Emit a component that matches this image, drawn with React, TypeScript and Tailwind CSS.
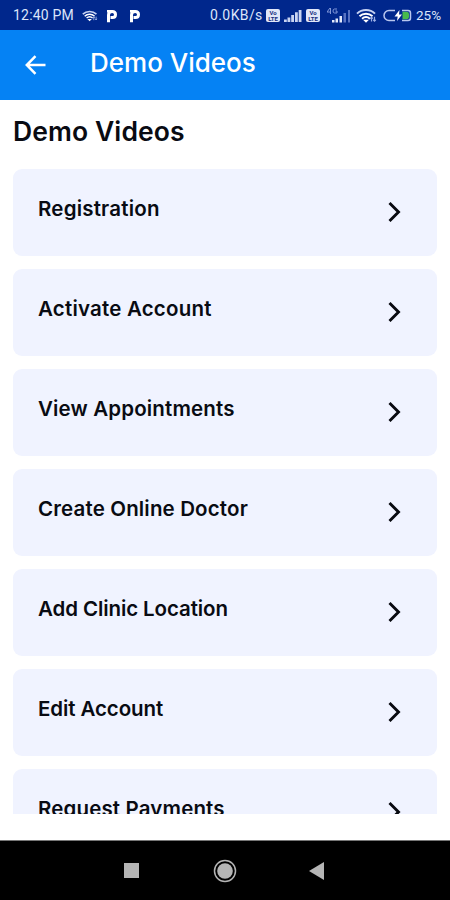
const VIDEOS = [
  { title: "Registration", spacing: "tracking-[0.2px]" },
  { title: "Activate Account", spacing: "tracking-[0.2px]" },
  { title: "View Appointments", spacing: "tracking-[0.15px]" },
  { title: "Create Online Doctor", spacing: "tracking-[0.15px]" },
  { title: "Add Clinic Location", spacing: "tracking-[-0.1px]" },
  { title: "Edit Account", spacing: "tracking-[-0.1px]" },
  { title: "Request Payments", spacing: "tracking-[0.15px]" },
]

function WifiIcon({ className }: { className: string }) {
  return (
    <svg viewBox="0 0 21 14" className={className} fill="none">
      <path d="M1 4.600C6-.2 14-.2 19 4.600" stroke="#c6d3f3" strokeWidth="2" />
      <path d="M3.500 7.300c3.700-3.500 9.300-3.500 13 0" stroke="#fff" strokeWidth="2" />
      <path d="M6 9.700c2.400-2.100 5.600-2.100 8 0" stroke="#fff" strokeWidth="1.800" />
      <path d="M7 10.800h6L10 13.800z" fill="#fff" />
      <path d="M15.500 12.500V8.300m-1.300 1.300 1.300-1.400 1.300 1.400M18.500 7.800V12m-1.300-1.200 1.300 1.400 1.300-1.400" stroke="#9db0e5" strokeWidth="1.200" />
    </svg>
  )
}

function ParkingIcon() {
  return (
    <svg viewBox="0 0 12 14" className="h-[14px] w-3" fill="none">
      <path d="M2.500 13.300V6C2.500 3.500 4.200 2.500 6.200 2.500S9.500 3.700 9.500 5.500 8.200 8.500 6.500 8.500H4.500" stroke="#fff" strokeWidth="3" />
      <path d="M1 1h5.500v2.500H1z" fill="#fff" />
    </svg>
  )
}

function VolteIcon() {
  return (
    <div className="flex h-[13px] w-[14px] shrink-0 flex-col items-center justify-center rounded-[2px] bg-[#e1e7f8] text-[6px] leading-[5.5px] font-bold text-[#152d82]">
      <span>Vo</span>
      <span>LTE</span>
    </div>
  )
}

function SignalIcon() {
  return (
    <svg viewBox="0 0 19 13" className="h-[13px] w-[19px] shrink-0" fill="#c9d4f2">
      <path d="M1 10.500h2.800V13H1zM4.500 8.500h2.800V13H4.500zM8.200 6H11v7H8.200zM12 3.300h2.800V13H12zM15.700 1h2.800v12h-2.800z" />
    </svg>
  )
}

function WeakSignalIcon() {
  return (
    <svg viewBox="0 0 24 16" className="h-4 w-6 shrink-0">
      <path d="M3 0 0 4h4M3.500 0v6M10 1H7.500Q6 1 6 3t1.500 2H10V3H8.500" fill="none" stroke="#8298d8" />
      <path d="M5 12h2.500v2.500H5zM8.500 10.500H11v4H8.500zM12.500 8H15v6.500h-2.500z" fill="#e5ebfb" />
      <path d="M16.500 5H19v9.500h-2.500zM21 2h2v12.500h-2z" fill="#5873c2" />
    </svg>
  )
}

function BatteryIcon() {
  return (
    <svg viewBox="0 0 29 13" className="h-[13px] w-[29px] shrink-0" fill="none">
      <path d="M12 1.500H6a5 5 0 0 0 0 10h6M19 1.500h6q2.500 0 2.500 2.500v5q0 2.500-2.500 2.500h-6" stroke="#b9c7ef" strokeWidth="1.500" />
      <path d="M19.500 2.800h4q2.500 0 2.500 2.200v3q0 2.300-2.500 2.300h-4z" fill="#47b94c" />
      <path d="m16.500 1-5 6.500h3.200L14 12l5-6.500h-3z" fill="#fff" />
    </svg>
  )
}

function StatusBar() {
  return (
    <div className="flex h-[30px] items-center bg-[#00278c] pt-px font-['Roboto',sans-serif] text-[14px] text-[#dce5fa]">
      <span className="ml-[13px] w-[69px] shrink-0 whitespace-nowrap tracking-[0.2px]">12:40 PM</span>
      <WifiIcon className="h-3 w-4 shrink-0" />
      <div className="ml-2 flex shrink-0 gap-[11px]">
        <ParkingIcon />
        <ParkingIcon />
      </div>
      <span className="ml-[69px] w-[56px] shrink-0 whitespace-nowrap tracking-[0.4px]">0.0KB/s</span>
      <VolteIcon />
      <div className="ml-[3px]">
        <SignalIcon />
      </div>
      <div className="ml-1">
        <VolteIcon />
      </div>
      <div className="ml-[7px]">
        <WeakSignalIcon />
      </div>
      <WifiIcon className="ml-[5px] h-[14px] w-[21px] shrink-0" />
      <div className="ml-[6px]">
        <BatteryIcon />
      </div>
      <span className="ml-[4px] text-[13.5px]">25%</span>
    </div>
  )
}

function VideoCard({ title, spacing }: { title: string; spacing: string }) {
  return (
    <button className="flex h-[87px] w-full shrink-0 items-center justify-between rounded-[9px] bg-[#f0f3ff] pr-[36px] pb-[2px] pl-[25px] text-left">
      <span className={`-mt-1.5 whitespace-nowrap text-[20.5px] leading-7 font-semibold ${spacing}`}>{title}</span>
      <svg viewBox="0 0 13 20" className="h-5 w-[13px]" fill="none" stroke="#080a10" strokeWidth="2.900">
        <path d="m1.500 1 9 9-9 9" />
      </svg>
    </button>
  )
}

export default function App() {
  return (
    <div className="flex h-[900px] w-[450px] flex-col overflow-hidden bg-white font-['Inter',sans-serif] text-[#090b12]">
      <StatusBar />

      <header className="flex h-[70px] items-center bg-[#0582f4] text-white">
        <svg viewBox="0 0 22 20" className="ml-[25px] h-5 w-[22px]" fill="none" stroke="currentColor" strokeWidth="2.500">
          <path d="M20.500 10H2M10.500 1.200 1.800 10l8.700 8.800" />
        </svg>
        <span className="mb-[5px] ml-[43px] whitespace-nowrap text-[26px] leading-8 font-medium">Demo Videos</span>
      </header>

      <main className="flex h-[714px] flex-col overflow-hidden pr-[13px] pl-[13px]">
        <h1 className="mt-[15px] mb-[22px] whitespace-nowrap text-[26.5px] leading-8 font-semibold tracking-[0.1px]">Demo Videos</h1>
        <div className="flex flex-col gap-[13px]">
          {VIDEOS.map((video) => (
            <VideoCard key={video.title} {...video} />
          ))}
        </div>
      </main>

      {/* Android navigation bar */}
      <nav className="mt-[26px] flex h-[60px] items-center border-t border-[#777] bg-black">
        <div className="ml-[124px] h-[15px] w-[15px] bg-[#b5b5b5]" />
        <svg viewBox="0 0 24 24" className="ml-[74px] h-6 w-6" fill="none">
          <circle cx="12" cy="12" r="10.500" stroke="#b5b5b5" strokeWidth="1.500" />
          <circle cx="12" cy="12" r="7.800" fill="#b5b5b5" />
        </svg>
        <svg viewBox="0 0 15 18" className="ml-[72px] h-[18px] w-[15px]" fill="#b5b5b5">
          <path d="M15 0v18L0 9z" />
        </svg>
      </nav>
    </div>
  )
}
